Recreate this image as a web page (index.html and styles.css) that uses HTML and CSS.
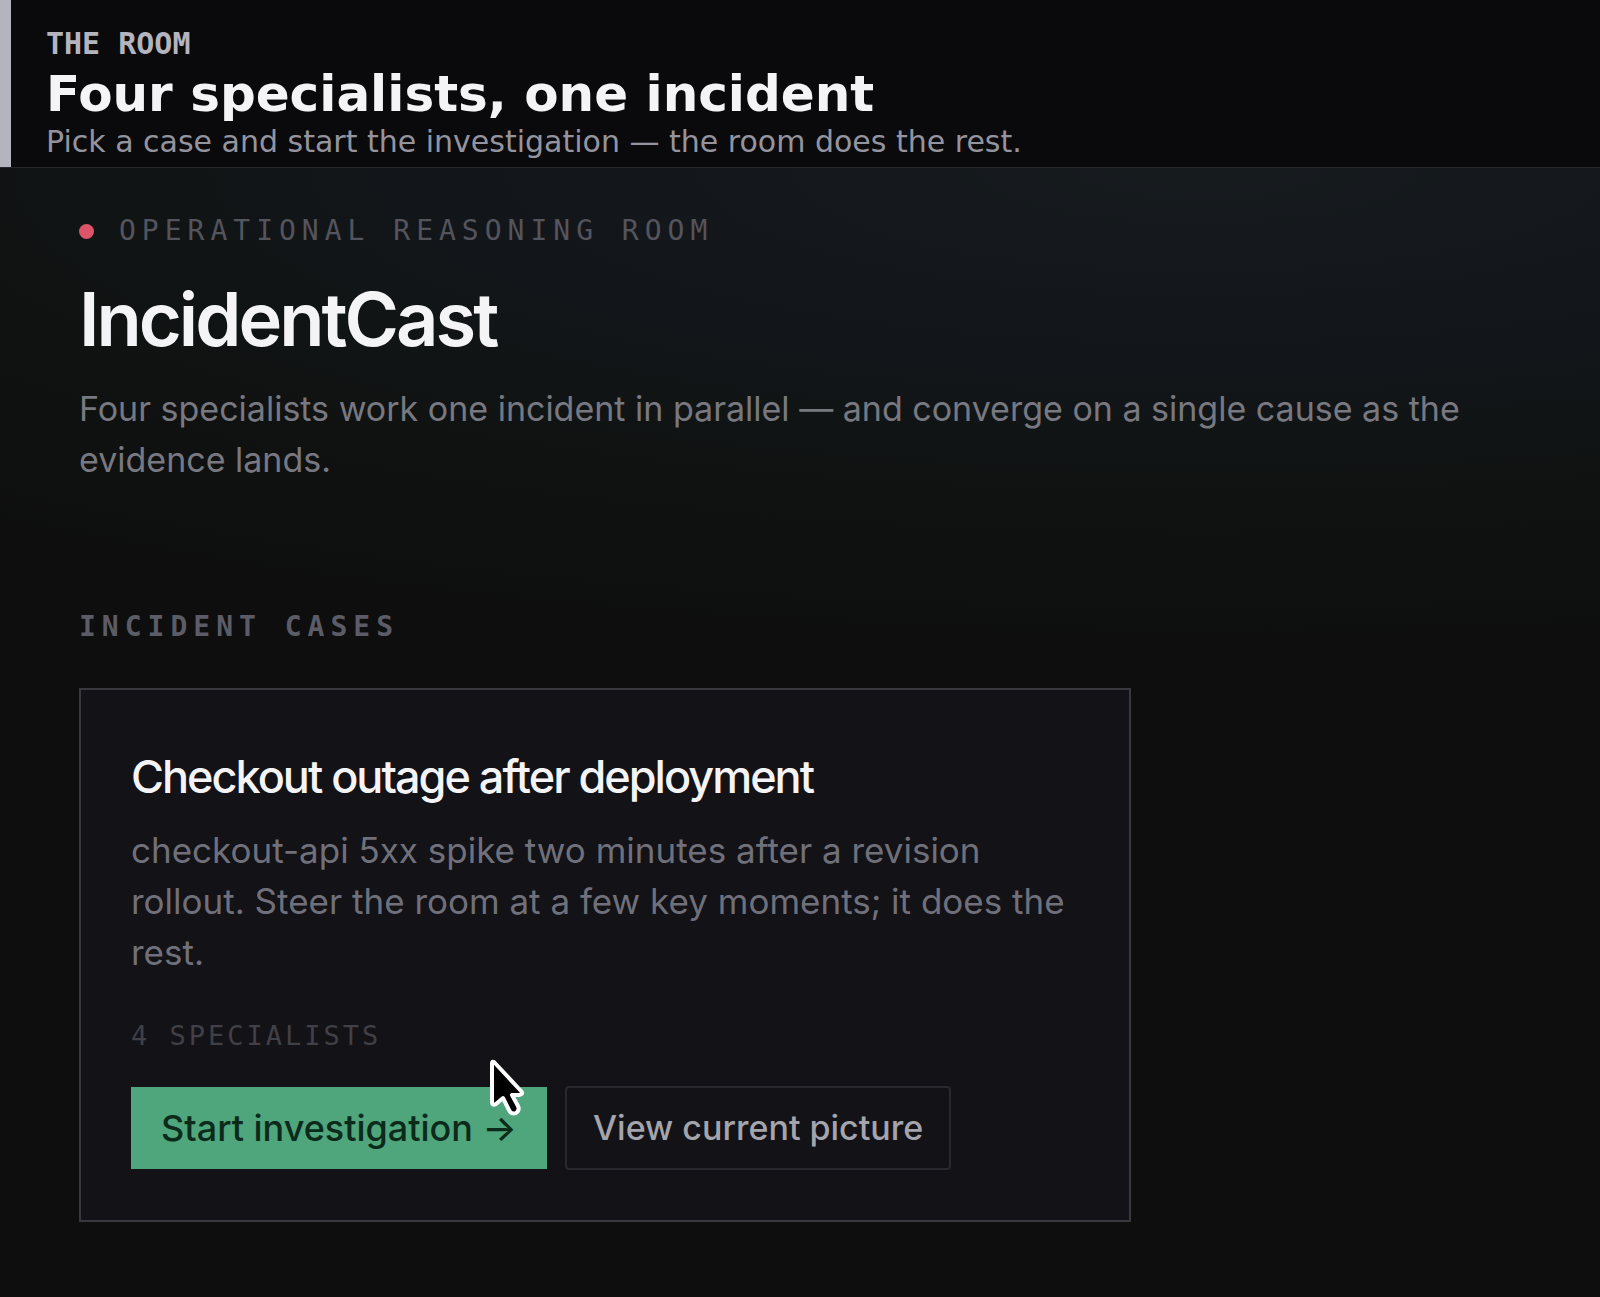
FILE: index.html
```html
<!DOCTYPE html>
<html lang="en">
<head>
    <meta charset="UTF-8">
    <meta name="viewport" content="width=device-width, initial-scale=1.0">
    <title>IncidentCast</title>
    <link rel="stylesheet" href="styles.css">
</head>
<body>
    <header class="banner">
        <p class="banner-label">THE ROOM</p>
        <h2 class="banner-title">Four specialists, one incident</h2>
        <p class="banner-text">Pick a case and start the investigation — the room does the rest.</p>
    </header>

    <main class="room">
        <p class="eyebrow"><span class="dot"></span>OPERATIONAL REASONING ROOM</p>
        <h1>IncidentCast</h1>
        <p class="intro">Four specialists work one incident in parallel — and converge on a single cause as the evidence lands.</p>

        <h2 class="section-title">INCIDENT CASES</h2>

        <article class="card">
            <h3>Checkout outage after deployment</h3>
            <p class="card-text">checkout-api 5xx spike two minutes after a revision rollout. Steer the room at a few key moments; it does the rest.</p>
            <p class="meta">4 SPECIALISTS</p>
            <div class="actions">
                <button type="button" class="btn btn-primary">Start investigation →
                    <svg class="cursor" viewBox="0 0 34 58" aria-hidden="true">
                        <path d="M2 4 V43 Q2 47 6 45 L13 39 L19 51 Q21 56 26 54 Q30 51 28 47 L22 36 H29 Q34 35 31 32 L4 3 Q2 2 2 4 Z" />
                    </svg>
                </button>
                <button type="button" class="btn btn-secondary">View current picture</button>
            </div>
        </article>
    </main>
</body>
</html>
```

FILE: styles.css
```css
* {
    box-sizing: border-box;
}
body {
    margin: 0;
    min-height: 100vh;
    background-color: #0e0e0e;
    color: #f4f4f6;
    font-family: Inter, sans-serif;
}
h1, h2, h3, p {
    margin: 0;
}

/* Banner */
.banner {
    padding: 24px 35px 8px;
    border-left: 11px solid #b4b4be;
    background-color: #0a0a0c;
    font-family: "DejaVu Sans", sans-serif;
}
.banner-label {
    color: #b4b4be;
    font-family: "DejaVu Sans Mono", monospace;
    font-size: 30px;
    font-weight: bold;
    line-height: 40px;
}
.banner-title {
    font-size: 50px;
    line-height: 60px;
}
.banner-text {
    color: #94949e;
    font-size: 30px;
    line-height: 35px;
}

/* Room */
.room {
    padding: 41px 79px 75px;
    border-top: 1px solid #26262a;
    background: radial-gradient(ellipse 1900px 480px at 75% 0, #161b1e, #12161a 40%, #101312 65%, #0e0e0e);
}
.eyebrow {
    display: flex;
    align-items: center;
    gap: 25px;
    color: #54545c;
    font-family: "DejaVu Sans Mono", monospace;
    font-size: 28px;
    line-height: 44px;
    letter-spacing: 6px;
}
.dot {
    width: 15px;
    height: 15px;
    border-radius: 50%;
    background-color: #dc5468;
}
h1 {
    margin-top: 26px;
    font-size: 74px;
    font-weight: 600;
    line-height: 80px;
    letter-spacing: -3px;
}
.intro {
    margin-top: 24px;
    color: #787880;
    font-size: 34px;
    line-height: 51px;
}
.section-title {
    margin-top: 120px;
    color: #5c5c66;
    font-family: "DejaVu Sans Mono", monospace;
    font-size: 28px;
    line-height: 44px;
    letter-spacing: 6px;
}

/* Case card */
.card {
    max-width: 1052px;
    margin-top: 39px;
    padding: 59px 50px 50px;
    border: 2px solid #38383e;
    background-color: #121217;
}
.card h3 {
    font-size: 45px;
    font-weight: 500;
    line-height: 56px;
    letter-spacing: -2px;
}
.card-text {
    margin-top: 20px;
    color: #70707a;
    font-size: 35px;
    line-height: 51px;
}
.meta {
    margin-top: 36px;
    color: #404046;
    font-family: "DejaVu Sans Mono", monospace;
    font-size: 27px;
    line-height: 44px;
    letter-spacing: 3px;
}
.actions {
    display: flex;
    flex-wrap: wrap;
    align-items: center;
    gap: 18px;
    margin-top: 28px;
}
.btn {
    padding: 16px 30px;
    border: 0;
    font-family: Inter, sans-serif;
    font-size: 36px;
    font-weight: 500;
    line-height: 50px;
    cursor: pointer;
}
.btn-primary {
    position: relative;
    background-color: #4fa57c;
    color: #0c2a1a;
}
.btn-secondary {
    padding: 15px 26px;
    border: 2px solid #28282e;
    border-radius: 4px;
    background-color: transparent;
    color: #a4a4ac;
    font-size: 34px;
}

/* Pointer over the primary button */
.cursor {
    position: absolute;
    top: -28px;
    right: 23px;
    width: 34px;
    height: 58px;
    fill: #000;
    stroke: #fff;
    stroke-width: 4;
    stroke-linejoin: round;
    overflow: visible;
}
```
